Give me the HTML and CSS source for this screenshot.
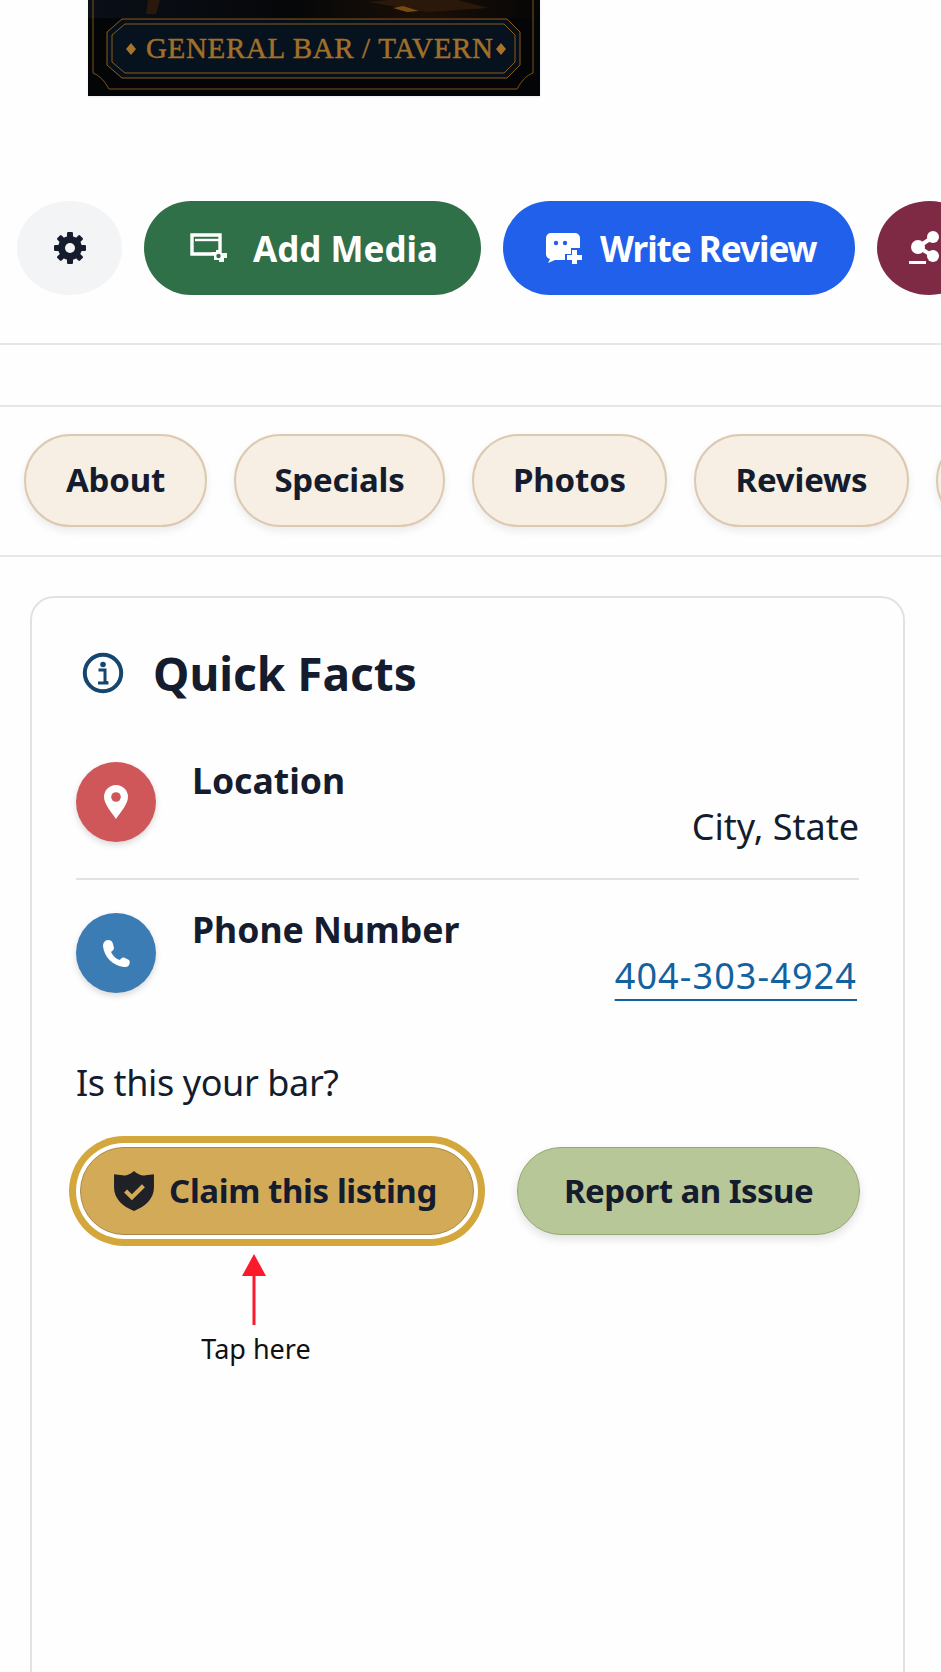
FILE: index.html
```html
<!DOCTYPE html>
<html lang="en">
<head>
<meta charset="utf-8">
<title>General Bar / Tavern</title>
<link rel="stylesheet" href="styles.css">
</head>
<body>
<div class="hero">
  <svg class="hero-art" viewBox="0 0 452 96" width="452" height="96">
    <defs>
      <linearGradient id="glow" x1="0" x2="1" y1="0" y2="0">
        <stop offset="0" stop-color="#0a0f18"/>
        <stop offset="0.45" stop-color="#060709"/>
        <stop offset="0.75" stop-color="#1a0f06"/>
        <stop offset="1" stop-color="#060606"/>
      </linearGradient>
    </defs>
    <rect width="452" height="96" fill="#040506"/>
    <rect width="452" height="18" fill="url(#glow)"/>
    <path d="M60 0h12l-4 14h-10zM280 2l60 10 60-4-30-8h-70z" fill="#2a190a"/>
    <path d="M305 8l14 4 12-1-16-5z" fill="#7a4a12"/>
    <path d="M34 19H419L432 32V65L419 78H34L19 65V32Z" fill="#071019" stroke="#8a5d20" stroke-width="1"/>
    <path d="M37 24H416L427 35V62L416 73H37L24 62V35Z" fill="#07121f" stroke="#8a5d20" stroke-width="1"/>
    <path d="M5 0V73Q14 76 21 89H429Q436 76 445 73V0" fill="none" stroke="#7b5219" stroke-width="1"/>
    <path d="M43 43l5 6-5 6-5-6zM413 43l5 6-5 6-5-6z" fill="#a8732a"/>
    <text class="hero-label" x="58" y="58" textLength="347" lengthAdjust="spacing">GENERAL BAR / TAVERN</text>
  </svg>
</div>

<div class="actions">
  <button class="round gear" aria-label="Settings">
    <svg viewBox="0 0 32 32" width="32" height="32">
      <g fill="#141c2e">
        <rect x="13" y="0" width="6" height="32" rx="1.2"/>
        <rect x="13" y="0" width="6" height="32" rx="1.2" transform="rotate(45 16 16)"/>
        <rect x="13" y="0" width="6" height="32" rx="1.2" transform="rotate(90 16 16)"/>
        <rect x="13" y="0" width="6" height="32" rx="1.2" transform="rotate(135 16 16)"/>
      </g>
      <circle cx="16" cy="16" r="12" fill="#141c2e"/>
      <circle cx="16" cy="16" r="5" fill="#f3f4f6"/>
    </svg>
  </button>
  <button class="pill green">
    <svg class="pill-icon" viewBox="0 0 38 30" width="38" height="30">
      <path d="M2 2h28v19H2z" fill="none" stroke="#fff" stroke-width="3.400"/>
      <path d="M5 7h25" stroke="#fff" stroke-width="2.400"/>
      <path d="M26 17h5v3h6v5h-3v4h-5v-2h-5v-5h-2v-3h4z" fill="#fff"/>
      <circle cx="28.500" cy="23" r="2.200" fill="#307049"/>
    </svg>
    Add Media
  </button>
  <button class="pill blue">
    <svg class="pill-icon" viewBox="0 0 38 32" width="38" height="32">
      <path d="M6 1h24a5 5 0 0 1 5 5v10h-9v6h-6v6H10l-7 3 2-4q-4-1-4-5V6a5 5 0 0 1 5-5z" fill="#fff"/>
      <circle cx="11" cy="11" r="2.200" fill="#2160ea"/>
      <circle cx="20" cy="11" r="2.200" fill="#2160ea"/>
      <path d="M27 18h5v5h5v5h-5v4h-5v-4h-5v-5h5z" fill="#fff"/>
    </svg>
    Write Review
  </button>
  <button class="round share" aria-label="Share">
    <svg viewBox="0 0 32 34" width="32" height="34">
      <g fill="#fff">
        <circle cx="24" cy="6" r="6"/>
        <circle cx="9" cy="16" r="7"/>
        <circle cx="24" cy="25" r="6"/>
        <rect x="0" y="30" width="17" height="3"/>
      </g>
      <path d="M24 6L9 16l15 9" fill="none" stroke="#fff" stroke-width="4"/>
    </svg>
  </button>
</div>

<div class="spacer-band"></div>

<nav class="tabs">
  <a class="tab tab-about">About</a>
  <a class="tab tab-specials">Specials</a>
  <a class="tab tab-photos">Photos</a>
  <a class="tab tab-reviews">Reviews</a>
  <a class="tab tab-more" aria-label="More"></a>
</nav>

<section class="card">
  <h2 class="card-title">
    <svg viewBox="0 0 42 42" width="42" height="42">
      <circle cx="21" cy="21" r="18.200" fill="none" stroke="#15466f" stroke-width="4"/>
      <circle cx="21" cy="12.500" r="2.800" fill="#15466f"/>
      <path d="M16.500 18h6.500v12.500h3M16 31h10.500" fill="none" stroke="#15466f" stroke-width="3"/>
    </svg>
    <span>Quick Facts</span>
  </h2>

  <div class="fact fact-first">
    <div class="fact-icon red">
      <svg viewBox="0 0 24 34" width="24" height="34">
        <path d="M12 0a12 12 0 0 1 12 12c0 7-8 16-12 22C8 28 0 19 0 12A12 12 0 0 1 12 0z" fill="#fff"/>
        <circle cx="12" cy="12" r="4.800" fill="#cf575a"/>
      </svg>
    </div>
    <div class="fact-body">
      <div class="fact-label">Location</div>
      <div class="fact-value">City, State</div>
    </div>
  </div>

  <div class="fact">
    <div class="fact-icon blue-icon">
      <svg viewBox="0 0 27 27" width="27" height="27">
        <path d="M5 0C8 0 9 1 10 4L11 8C11 10 9 11 8 12C10 16 13 19 17 20C18 18 20 17 22 18L26 20C27 21 27 23 26 25C25 27 23 27 21 27C10 26 1 17 0 6C0 3 2 0 5 0Z" fill="#fff"/>
      </svg>
    </div>
    <div class="fact-body fact-body-tight">
      <div class="fact-label">Phone Number</div>
      <div class="fact-value"><a class="phone" href="tel:404-303-4924">404-303-4924</a></div>
    </div>
  </div>

  <p class="claim-question">Is this your bar?</p>

  <div class="claim-row">
    <button class="claim">
      <svg viewBox="0 0 40 40" width="42" height="42">
        <path d="M20 1c4 3.500 8 5 11 4l8-1v13c0 10-8 18-19 22C9 35 1 27 1 17V4l8 1c3 1 7-0.500 11-4z" fill="#1f2126"/>
        <path d="M12 20l6 6 11-11" fill="none" stroke="#d3ab58" stroke-width="4"/>
      </svg>
      Claim this listing
    </button>
    <button class="report">Report an Issue</button>
  </div>

  <div class="hint">
    <svg class="hint-arrow" viewBox="0 0 26 72" width="26" height="72">
      <path d="M13 0l12 22H1z" fill="#fb1a2a"/>
      <path d="M13 20v51" stroke="#fb1a2a" stroke-width="3"/>
    </svg>
    <span class="hint-text">Tap here</span>
  </div>
</section>
</body>
</html>
```
FILE: styles.css
```css
* { box-sizing: border-box; }

html, body {
  margin: 0;
  height: 1672px;
  overflow: hidden;
  background: #fefefe;
}

body {
  font-family: "Noto Sans", "Open Sans", "Liberation Sans", sans-serif;
  color: #141c2e;
}

button {
  font-family: inherit;
  border: 0;
  cursor: pointer;
}

.hero {
  height: 96px;
  width: 452px;
  margin-left: 88px;
  box-shadow: 0 1px 2px rgba(0, 0, 0, 0.08);
}

.hero-art { display: block; }

.hero-label {
  font-family: "Liberation Serif", serif;
  font-size: 29px;
  font-weight: 400;
  fill: #a06f29;
  stroke: #a06f29;
  stroke-width: 0.5px;
}

.actions {
  display: flex;
  align-items: center;
  gap: 22px;
  padding: 106px 0 49px 17px;
  height: 249px;
  width: 100%;
  overflow: hidden;
  border-bottom: 2px solid #e6e6e6;
}

.round {
  flex: none;
  width: 105px;
  height: 94px;
  border-radius: 50%;
  display: flex;
  align-items: center;
  justify-content: center;
  padding: 0;
}

.gear { background: #f3f4f6; }

.share {
  background: #7e2a45;
  justify-content: flex-start;
  padding-left: 32px;
}

.pill {
  flex: none;
  height: 94px;
  border-radius: 47px;
  display: flex;
  align-items: center;
  color: #fff;
  font-size: 35px;
  font-weight: 700;
  white-space: nowrap;
}

.pill-icon { flex: none; }

.green {
  width: 337px;
  background: #307049;
  padding-left: 46px;
  gap: 25px;
}

.blue {
  width: 352px;
  background: #2160ea;
  padding-left: 42px;
  gap: 17px;
  letter-spacing: -1px;
}

.spacer-band {
  height: 62px;
  border-bottom: 2px solid #e6e6e6;
}

.tabs {
  display: flex;
  gap: 27px;
  padding: 27px 0 28px 24px;
  height: 150px;
  overflow: hidden;
  border-bottom: 2px solid #e6e6e6;
}

.tab {
  flex: none;
  height: 93px;
  padding: 0 0 3px;
  display: flex;
  align-items: center;
  justify-content: center;
  border-radius: 46.500px;
  background: #f7efe3;
  border: 2px solid #dcc9b0;
  font-size: 33px;
  font-weight: 700;
  letter-spacing: -0.2px;
  box-shadow: 0 4px 8px rgba(0, 0, 0, 0.08);
}

.tab-about { width: 183px; }
.tab-specials { width: 211px; }
.tab-photos { width: 195px; }
.tab-reviews { width: 215px; }
.tab-more { width: 160px; }

.card {
  margin: 39px 36px 0 30px;
  height: 1300px;
  padding: 0 44px;
  border: 2px solid #e2e2e2;
  border-radius: 24px;
}

.card-title {
  display: flex;
  align-items: center;
  gap: 29px;
  margin: 0;
  padding: 40px 0 0 6px;
  height: 110px;
  font-size: 46px;
  line-height: 52px;
  font-weight: 700;
}

.card-title svg { flex: none; }

.fact {
  display: flex;
  gap: 36px;
  padding-top: 33px;
}

.fact-first {
  margin-top: 54px;
  padding-top: 0;
  padding-bottom: 26px;
  border-bottom: 2px solid #e2e2e2;
}

.fact-icon {
  flex: none;
  width: 80px;
  height: 80px;
  border-radius: 50%;
  display: flex;
  align-items: center;
  justify-content: center;
  box-shadow: 0 3px 6px rgba(0, 0, 0, 0.15);
}

.red { background: #cf575a; }
.blue-icon { background: #3a7cb3; }

.fact-body { flex: 1; }
.fact-body-tight { margin-top: -2px; }

.fact-label {
  font-size: 35.600px;
  font-weight: 700;
  line-height: 37px;
  margin-bottom: 3px;
}

.fact-value {
  font-size: 36px;
  line-height: 50px;
  text-align: right;
}

.phone {
  color: #14619f;
  letter-spacing: 1.100px;
  margin-right: 2px;
  text-decoration: underline;
  text-decoration-thickness: 2px;
  text-underline-offset: 10px;
}

.claim-question {
  margin: 57px 0 0;
  font-size: 36px;
  line-height: 50px;
  letter-spacing: -0.4px;
}

.claim-row {
  display: flex;
  justify-content: space-between;
  margin: 39px -1px 0 0;
  padding-left: 4px;
}

.claim, .report {
  height: 88px;
  border-radius: 44px;
  padding-bottom: 2px;
  font-size: 33px;
  font-weight: 700;
  color: #141c2e;
  display: flex;
  align-items: center;
  justify-content: center;
  white-space: nowrap;
}

.claim {
  width: 394px;
  gap: 14px;
  padding-right: 10px;
  letter-spacing: -0.4px;
  background: #d3ab58;
  border: 1px solid #a98a45;
  box-shadow: 0 0 0 4px #fff, 0 0 0 11px #d4a73d;
}

.report {
  width: 343px;
  letter-spacing: -0.55px;
  background: #b8c798;
  border: 1px solid #94a871;
  box-shadow: 0 4px 10px rgba(0, 0, 0, 0.12);
}

.hint {
  display: flex;
  flex-direction: column;
  align-items: center;
  width: 360px;
  margin-top: 19px;
}

.hint-arrow { margin-left: -5px; }

.hint-text {
  font-size: 27px;
  line-height: 36px;
  margin-top: 5px;
  color: #111;
}
```
